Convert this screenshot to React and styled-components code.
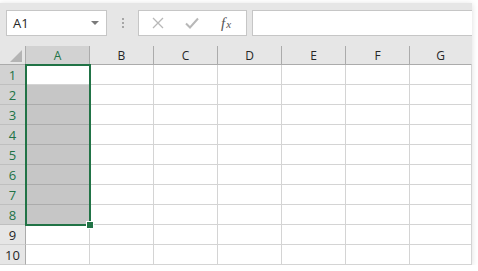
import React from 'react'
import styled, { createGlobalStyle } from 'styled-components'

const GlobalStyle = createGlobalStyle`
	body {
		margin: 0;
		background: #ffffff;
		font-family: 'Open Sans', 'Noto Sans', sans-serif;
	}
`

const COLUMNS = ['A', 'B', 'C', 'D', 'E', 'F', 'G']
const ROWS = [1, 2, 3, 4, 5, 6, 7, 8, 9, 10]
const GREEN = '#217346'

const Window = styled.div`
	width: 472px;
	margin-top: 3px;
	background: #ffffff;
	box-shadow: 0 1px 6px rgba(0, 0, 0, 0.14);
`

const Toolbar = styled.div`
	height: 43px;
	box-sizing: border-box;
	padding: 7px 0 0 6px;
	background: #e6e6e6;
	display: flex;
	align-items: flex-start;
`

const NameBox = styled.div`
	width: 101px;
	height: 26px;
	box-sizing: border-box;
	border: 1px solid #c6c6c6;
	background: #ffffff;
	display: flex;
	align-items: center;
	justify-content: space-between;
	padding: 0 7px 0 6px;
	font-size: 13px;
	color: #262626;
`

const DropArrow = styled.span`
	width: 0;
	height: 0;
	border-left: 4px solid transparent;
	border-right: 4px solid transparent;
	border-top: 4px solid #7a7a7a;
`

const Grip = styled.div`
	width: 31px;
	height: 26px;
	display: flex;
	flex-direction: column;
	align-items: center;
	justify-content: center;
	gap: 2px;

	span {
		width: 2px;
		height: 2px;
		background: #a6a6a6;
	}
`

const FormulaButtons = styled.div`
	width: 109px;
	height: 26px;
	box-sizing: border-box;
	border: 1px solid #c6c6c6;
	background: #ffffff;
	display: flex;
	align-items: center;
	justify-content: space-around;
	padding: 0 4px 0 2px;
`

const Fx = styled.span`
	font-family: 'Liberation Serif', 'DejaVu Serif', serif;
	font-style: italic;
	font-size: 15px;
	color: #555555;
	display: flex;
	align-items: baseline;

	small {
		font-size: 11px;
		margin-left: 1px;
	}
`

const FormulaInput = styled.div`
	flex: 1;
	margin-left: 5px;
	height: 26px;
	box-sizing: border-box;
	border: 1px solid #c6c6c6;
	border-right: none;
	background: #ffffff;
`

const Sheet = styled.div`
	position: relative;
	display: grid;
	grid-template-columns: 26px repeat(6, 64px) 62px;
	grid-template-rows: 19px repeat(10, 20px);
	font-size: 12px;
`

const Corner = styled.div`
	background: #e6e6e6;
	border-right: 1px solid #ababab;
	border-bottom: 1px solid #ababab;
	box-sizing: border-box;
	position: relative;

	&::after {
		content: '';
		position: absolute;
		right: 3px;
		bottom: 2px;
		width: 0;
		height: 0;
		border-left: 12px solid transparent;
		border-bottom: 12px solid #b4b4b4;
	}
`

const ColHeader = styled.div`
	box-sizing: border-box;
	background: ${(p) => (p.$active ? '#d2d2d2' : '#e6e6e6')};
	color: ${(p) => (p.$active ? GREEN : '#262626')};
	border-right: 1px solid ${(p) => (p.$last ? 'transparent' : '#ababab')};
	border-bottom: 1px solid #ababab;
	display: flex;
	align-items: center;
	justify-content: center;
	padding-top: 1px;
`

const RowHeader = styled.div`
	box-sizing: border-box;
	background: ${(p) => (p.$active ? '#d2d2d2' : '#e6e6e6')};
	color: ${(p) => (p.$active ? GREEN : '#262626')};
	border-right: 1px solid #ababab;
	border-bottom: 1px solid ${(p) => (p.$active ? '#bfbfbf' : '#d0d0d0')};
	display: flex;
	align-items: center;
	justify-content: center;
	font-size: 13px;
`

const Cell = styled.div`
	box-sizing: border-box;
	background: ${(p) => (p.$selected ? '#c6c6c6' : '#ffffff')};
	border-right: 1px solid #d4d4d4;
	border-bottom: 1px solid ${(p) => (p.$selected ? '#ababab' : '#d4d4d4')};
`

const Selection = styled.div`
	position: absolute;
	left: 25px;
	top: 18px;
	width: 66px;
	height: 162px;
	box-sizing: border-box;
	border: 2px solid ${GREEN};
	pointer-events: none;
`

const FillHandle = styled.div`
	position: absolute;
	right: -4px;
	bottom: -4px;
	width: 6px;
	height: 6px;
	background: ${GREEN};
	box-shadow: 0 0 0 1px #ffffff;
`

const CancelIcon = () => (
	<svg width='12' height='12' viewBox='0 0 12 12'>
		<path d='M1 1 L11 11 M11 1 L1 11' stroke='#b8b8b8' strokeWidth='1.3' fill='none' />
	</svg>
)

const CheckIcon = () => (
	<svg width='14' height='12' viewBox='0 0 14 12'>
		<path d='M1 6.5 L5 10.5 L13 1.5' stroke='#b8b8b8' strokeWidth='2' fill='none' />
	</svg>
)

const App = () => {
	const isSelected = (col, row) => col === 'A' && row >= 2 && row <= 8

	return (
		<>
			<GlobalStyle />
			<Window>
				<Toolbar>
					<NameBox>
						<span>A1</span>
						<DropArrow />
					</NameBox>
					<Grip>
						<span />
						<span />
						<span />
					</Grip>
					<FormulaButtons>
						<CancelIcon />
						<CheckIcon />
						<Fx>
							f<small>x</small>
						</Fx>
					</FormulaButtons>
					<FormulaInput />
				</Toolbar>
				<Sheet>
					<Corner />
					{COLUMNS.map((c, i) => (
						<ColHeader
							key={c}
							$active={c === 'A'}
							$last={i === COLUMNS.length - 1}>
							{c}
						</ColHeader>
					))}
					{ROWS.map((r) => (
						<React.Fragment key={r}>
							<RowHeader $active={r <= 8}>{r}</RowHeader>
							{COLUMNS.map((c) => (
								<Cell key={c} $selected={isSelected(c, r)} />
							))}
						</React.Fragment>
					))}
					<Selection>
						<FillHandle />
					</Selection>
				</Sheet>
			</Window>
		</>
	)
}

export default App
